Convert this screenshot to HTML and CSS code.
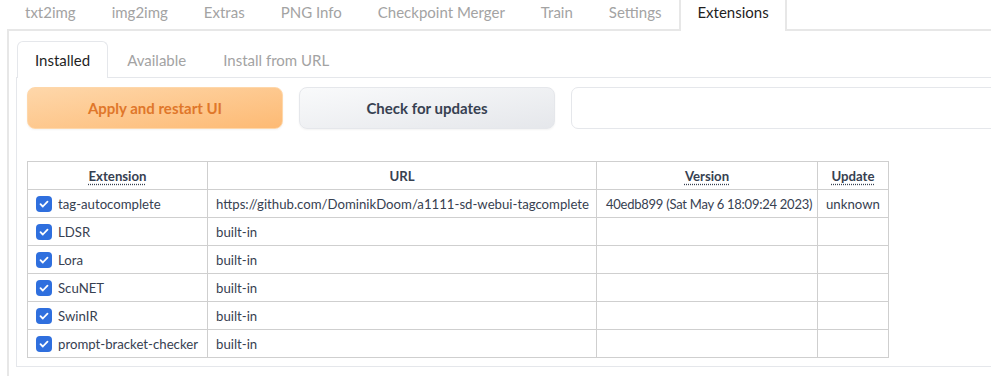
FILE: index.html
```html
<!DOCTYPE html>
<html lang="en">
<head>
    <meta charset="UTF-8">
    <meta name="viewport" content="width=device-width, initial-scale=1.0">
    <title>Extensions</title>
    <link rel="stylesheet" href="styles.css">
</head>
<body>
    <div class="page">
        <div class="tab-nav">
            <button class="tab">txt2img</button>
            <button class="tab">img2img</button>
            <button class="tab">Extras</button>
            <button class="tab">PNG Info</button>
            <button class="tab">Checkpoint Merger</button>
            <button class="tab">Train</button>
            <button class="tab">Settings</button>
            <button class="tab selected">Extensions</button>
        </div>

        <div class="tab-panel">
            <div class="sub-nav">
                <button class="sub-tab selected">Installed</button>
                <button class="sub-tab">Available</button>
                <button class="sub-tab">Install from URL</button>
            </div>

            <div class="sub-panel">
                <div class="actions">
                    <button class="btn btn-primary">Apply and restart UI</button>
                    <button class="btn btn-secondary">Check for updates</button>
                    <div class="textbox"></div>
                </div>

                <table class="ext-table">
                    <thead>
                        <tr>
                            <th class="col-name"><abbr title="Use checkbox to enable the extension">Extension</abbr></th>
                            <th class="col-url">URL</th>
                            <th class="col-version"><abbr title="Extension version">Version</abbr></th>
                            <th class="col-update"><abbr title="Use checkbox to mark the extension for update">Update</abbr></th>
                        </tr>
                    </thead>
                    <tbody>
                        <tr>
                            <td><label class="check"><span class="box"><svg viewBox="0 0 16 16"><path d="M4.5 8.2l2.3 2.3 4.7-4.9"/></svg></span>tag-autocomplete</label></td>
                            <td>https://github.com/DominikDoom/a1111-sd-webui-tagcomplete</td>
                            <td class="version">40edb899 (Sat May 6 18:09:24 2023)</td>
                            <td>unknown</td>
                        </tr>
                        <tr>
                            <td><label class="check"><span class="box"><svg viewBox="0 0 16 16"><path d="M4.5 8.2l2.3 2.3 4.7-4.9"/></svg></span>LDSR</label></td>
                            <td>built-in</td>
                            <td class="version"></td>
                            <td></td>
                        </tr>
                        <tr>
                            <td><label class="check"><span class="box"><svg viewBox="0 0 16 16"><path d="M4.5 8.2l2.3 2.3 4.7-4.9"/></svg></span>Lora</label></td>
                            <td>built-in</td>
                            <td class="version"></td>
                            <td></td>
                        </tr>
                        <tr>
                            <td><label class="check"><span class="box"><svg viewBox="0 0 16 16"><path d="M4.5 8.2l2.3 2.3 4.7-4.9"/></svg></span>ScuNET</label></td>
                            <td>built-in</td>
                            <td class="version"></td>
                            <td></td>
                        </tr>
                        <tr>
                            <td><label class="check"><span class="box"><svg viewBox="0 0 16 16"><path d="M4.5 8.2l2.3 2.3 4.7-4.9"/></svg></span>SwinIR</label></td>
                            <td>built-in</td>
                            <td class="version"></td>
                            <td></td>
                        </tr>
                        <tr>
                            <td><label class="check"><span class="box"><svg viewBox="0 0 16 16"><path d="M4.5 8.2l2.3 2.3 4.7-4.9"/></svg></span>prompt-bracket-checker</label></td>
                            <td>built-in</td>
                            <td class="version"></td>
                            <td></td>
                        </tr>
                    </tbody>
                </table>
            </div>
        </div>
    </div>
</body>
</html>
```

FILE: styles.css
```css
html, body {
    overflow: hidden;
}
body {
    margin: 0;
    font-family: 'Lato', 'Noto Sans', sans-serif;
    color: #374151;
    background: white;
}
button {
    font-family: inherit;
    cursor: pointer;
}
.page {
    width: 1200px;
    padding-left: 7px;
}

/* top level tabs */
.tab-nav {
    display: flex;
    margin-top: -10px;
    height: 39px;
    border-bottom: 2px solid #e7e7e7;
}
.tab {
    height: 41px;
    padding: 1px 16px 0;
    border: 2px solid transparent;
    border-bottom: none;
    background: none;
    font-size: 15px;
    line-height: 24px;
    color: #a3a3a3;
    text-align: left;
}
.tab.selected {
    border-color: #e7e7e7;
    background: white;
    color: #1f1f1f;
    border-radius: 6px 6px 0 0;
}

.tab-panel {
    border: 2px solid #e7e7e7;
    border-top: none;
    padding: 10px 8px 12px 7px;
}

/* sub tabs */
.sub-nav {
    display: flex;
    height: 36px;
    border-bottom: 1px solid #e5e7eb;
}
.sub-tab {
    height: 37px;
    padding: 0 17px;
    margin-left: 1px;
    border: 1px solid transparent;
    border-bottom: none;
    background: none;
    font-size: 15px;
    line-height: 36px;
    color: #a3a3a3;
}
.sub-tab.selected {
    border-color: #e5e7eb;
    background: white;
    color: #1f1f1f;
    border-radius: 6px 6px 0 0;
}
.sub-panel {
    border: 1px solid #e5e7eb;
    border-top: none;
    padding: 9px 10px 8px;
}

.actions {
    display: flex;
    gap: 16px;
}
.btn {
    width: 256px;
    height: 42px;
    border-radius: 8px;
    font-size: 15px;
    font-weight: 700;
    box-shadow: 0 1px 2px rgba(0,0,0,0.05);
}
.btn-primary {
    background: linear-gradient(to bottom right, #fed7aa, #fdba74);
    border: 1px solid #fed7aa;
    color: #e0772a;
}
.btn-secondary {
    background: linear-gradient(to bottom right, #f9fafb, #e5e7eb);
    border: 1px solid #e5e7eb;
    color: #374151;
}
.textbox {
    width: 520px;
    height: 42px;
    box-sizing: border-box;
    border: 1px solid #e5e7eb;
    border-radius: 7px;
}

/* extension table */
.ext-table {
    margin-top: 32px;
    border-collapse: collapse;
    table-layout: fixed;
    width: 861px;
    font-size: 13.2px;
    color: #374151;
}
.ext-table th,
.ext-table td {
    box-sizing: border-box;
    border: 1px solid #cfcfcf;
    height: 28px;
    padding: 0 8px;
    text-align: left;
    white-space: nowrap;
}
.ext-table th {
    text-align: center;
    font-weight: 700;
    color: #374151;
}
.ext-table td.version {
    padding: 0 6px 0 9px;
    font-size: 13px;
    letter-spacing: -0.25px;
}
.ext-table abbr {
    text-decoration: underline dotted;
    text-underline-offset: 3px;
}
.col-name { width: 180px; }
.col-url { width: 389px; }
.col-version { width: 221px; }
.col-update { width: 71px; }

.check {
    display: flex;
    align-items: center;
    gap: 6px;
}
.box {
    width: 16px;
    height: 16px;
    border-radius: 4px;
    background: #2f6fde;
    display: inline-flex;
}
.box svg {
    width: 16px;
    height: 16px;
    fill: none;
    stroke: white;
    stroke-width: 1.8;
    stroke-linecap: round;
    stroke-linejoin: round;
}
```
